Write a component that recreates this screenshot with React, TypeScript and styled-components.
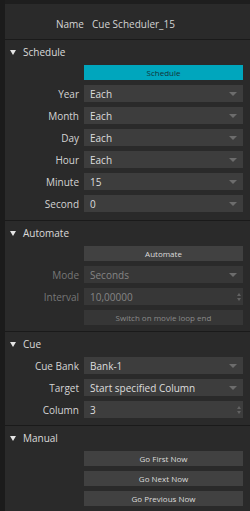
import React from 'react';
import styled, { createGlobalStyle } from 'styled-components';

const GlobalStyle = createGlobalStyle`
  html, body {
    margin: 0;
    padding: 0;
    background: #2a2a2a;
  }
  * {
    box-sizing: border-box;
  }
`;

const Frame = styled.div`
  display: flex;
  width: 250px;
  height: 511px;
  background: #2a2a2a;
  font-family: 'Open Sans', 'Noto Sans', sans-serif;
  font-size: 10px;
  color: #d4d4d4;
  overflow: hidden;
`;

const LeftStrip = styled.div`
  width: 5px;
  flex: none;
  background: #1b1b1b;
`;

const Panel = styled.div`
  flex: 1;
  display: flex;
  flex-direction: column;
  & > * {
    flex: none;
  }
`;

const TopStrip = styled.div`
  height: 4px;
  background: #1e1e1e;
`;

const NameRow = styled.div`
  height: 35px;
  display: flex;
  align-items: center;
  gap: 8px;
  padding: 5px 0 0 51px;
`;

const NameLabel = styled.span`
  color: #d6d6d6;
`;

const Separator = styled.div`
  height: 1px;
  background: #1a1a1a;
`;

const Section = styled.div<{ $pad?: number }>`
  display: flex;
  flex-direction: column;
  gap: 5px;
  padding-bottom: ${(p) => p.$pad ?? 7}px;
  & > * {
    flex: none;
  }
`;

const Header = styled.div`
  height: 20px;
  display: flex;
  align-items: center;
  gap: 7px;
  padding: 4px 0 0 5px;
  color: #dadada;
`;

const Caret = styled.span`
  width: 0;
  height: 0;
  border-left: 3.5px solid transparent;
  border-right: 3.5px solid transparent;
  border-top: 5px solid #e4e4e4;
`;

const Row = styled.div`
  display: grid;
  grid-template-columns: 74px 159px;
  column-gap: 5px;
  align-items: center;
`;

const Label = styled.span<{ $disabled?: boolean }>`
  text-align: right;
  padding-top: 1px;
  color: ${(p) => (p.$disabled ? '#777777' : '#d4d4d4')};
`;

const Control = styled.div<{ $disabled?: boolean }>`
  height: 17px;
  display: flex;
  align-items: center;
  justify-content: space-between;
  padding: 1px 6px 0;
  background: ${(p) => (p.$disabled ? '#373737' : '#3d3d3d')};
  color: ${(p) => (p.$disabled ? '#858585' : '#dedede')};
`;

const DropArrow = styled.span`
  width: 0;
  height: 0;
  border-left: 4.5px solid transparent;
  border-right: 4.5px solid transparent;
  border-top: 4px solid #6c6c6c;
`;

const Spinner = styled.span`
  display: flex;
  flex-direction: column;
  gap: 2px;
  margin-right: -4px;
`;

const SpinUp = styled.span`
  width: 0;
  height: 0;
  border-left: 2.5px solid transparent;
  border-right: 2.5px solid transparent;
  border-bottom: 3px solid #626262;
`;

const SpinDown = styled.span`
  width: 0;
  height: 0;
  border-left: 2.5px solid transparent;
  border-right: 2.5px solid transparent;
  border-top: 3px solid #626262;
`;

const Button = styled.div<{ $accent?: boolean; $disabled?: boolean }>`
  height: 15px;
  display: flex;
  align-items: center;
  justify-content: center;
  font-size: 8px;
  background: ${(p) => (p.$accent ? '#00a6bd' : p.$disabled ? '#363636' : '#414141')};
  color: ${(p) => (p.$accent ? '#13343a' : p.$disabled ? '#8a8a8a' : '#dcdcdc')};
`;

const ButtonRow = styled.div`
  display: grid;
  grid-template-columns: 74px 159px;
  column-gap: 5px;
  & > * {
    grid-column: 2;
  }
`;

type Kind = 'select' | 'spin';

interface FieldProps {
  label: string;
  value: string;
  kind?: Kind;
  disabled?: boolean;
}

const Field: React.FC<FieldProps> = ({ label, value, kind = 'select', disabled }) => (
  <Row>
    <Label $disabled={disabled}>{label}</Label>
    <Control $disabled={disabled}>
      <span>{value}</span>
      {kind === 'select' ? (
        <DropArrow />
      ) : (
        <Spinner>
          <SpinUp />
          <SpinDown />
        </Spinner>
      )}
    </Control>
  </Row>
);

const SectionHeader: React.FC<{ title: string }> = ({ title }) => (
  <Header>
    <Caret />
    <span>{title}</span>
  </Header>
);

const App: React.FC = () => {
  return (
    <>
      <GlobalStyle />
      <Frame>
        <LeftStrip />
        <Panel>
          <TopStrip />
          <NameRow>
            <NameLabel>Name</NameLabel>
            <span>Cue Scheduler_15</span>
          </NameRow>
          <Separator />

          <Section $pad={8}>
            <SectionHeader title="Schedule" />
            <ButtonRow>
              <Button $accent>Schedule</Button>
            </ButtonRow>
            <Field label="Year" value="Each" />
            <Field label="Month" value="Each" />
            <Field label="Day" value="Each" />
            <Field label="Hour" value="Each" />
            <Field label="Minute" value="15" />
            <Field label="Second" value="0" />
          </Section>
          <Separator />

          <Section $pad={6}>
            <SectionHeader title="Automate" />
            <ButtonRow>
              <Button>Automate</Button>
            </ButtonRow>
            <Field label="Mode" value="Seconds" disabled />
            <Field label="Interval" value="10,00000" kind="spin" disabled />
            <ButtonRow>
              <Button $disabled>Switch on movie loop end</Button>
            </ButtonRow>
          </Section>
          <Separator />

          <Section>
            <SectionHeader title="Cue" />
            <Field label="Cue Bank" value="Bank-1" />
            <Field label="Target" value="Start specified Column" />
            <Field label="Column" value="3" kind="spin" />
          </Section>
          <Separator />

          <Section>
            <SectionHeader title="Manual" />
            <ButtonRow>
              <Button>Go First Now</Button>
            </ButtonRow>
            <ButtonRow>
              <Button>Go Next Now</Button>
            </ButtonRow>
            <ButtonRow>
              <Button>Go Previous Now</Button>
            </ButtonRow>
          </Section>
        </Panel>
      </Frame>
    </>
  );
};

export default App;
